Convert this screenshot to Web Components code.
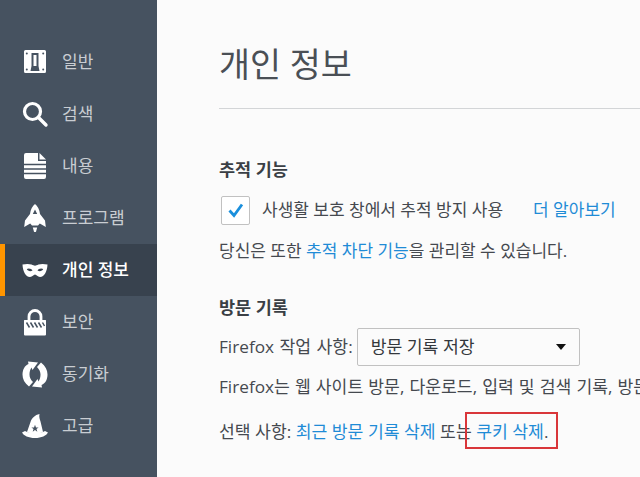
<!DOCTYPE html>
<html lang="ko">
<head>
<meta charset="utf-8">
<style>
  html, body { margin: 0; height: 100%; overflow: hidden; }
  body { font-family: "Open Sans", "Noto Sans CJK KR", sans-serif; }
</style>
</head>
<body>
<pref-page>
  <pref-sidebar slot="side">
    <pref-item label="일반" icon="general"></pref-item>
    <pref-item label="검색" icon="search"></pref-item>
    <pref-item label="내용" icon="content"></pref-item>
    <pref-item label="프로그램" icon="apps"></pref-item>
    <pref-item label="개인 정보" icon="mask" selected></pref-item>
    <pref-item label="보안" icon="lock"></pref-item>
    <pref-item label="동기화" icon="sync"></pref-item>
    <pref-item label="고급" icon="wizard"></pref-item>
  </pref-sidebar>
  <pref-heading>개인 정보</pref-heading>
  <pref-group heading="추적 기능" style="--head-gap:15px">
    <pref-check>사생활 보호 창에서 추적 방지 사용<a-link slot="more">더 알아보기</a-link></pref-check>
    <pref-line style="margin-top:14px;font-size:17px">당신은 또한 <a-link>추적 차단 기능</a-link>을 관리할 수 있습니다.</pref-line>
  </pref-group>
  <pref-group heading="방문 기록" style="padding-top:33px;--head-gap:10px">
    <pref-line class="sel">Firefox 작업 사항:<pref-select>방문 기록 저장</pref-select></pref-line>
    <pref-line style="margin-top:9px;word-spacing:.6px">Firefox는 웹 사이트 방문, 다운로드, 입력 및 검색 기록, 방문</pref-line>
    <pref-line style="margin-top:21px">선택 사항: <a-link>최근 방문 기록 삭제</a-link> 또는 <red-mark><a-link>쿠키 삭제</a-link>.</red-mark></pref-line>
  </pref-group>
</pref-page>

<script>
  // sidebar icons: 24 unit box with 2 units of room around it
  const ICONS = {
    general: '<path fill-rule="evenodd" d="M2.500 0h19A1.500 1.500 0 0 1 23 1.500v20a1.500 1.500 0 0 1-1.500 1.500h-19A1.500 1.500 0 0 1 1 21.500v-20A1.500 1.500 0 0 1 2.500 0zM8.500 3v13L7.500 21h9l-1-5V3zM3.800 2.500a1 1 0 1 0 0 2 1 1 0 0 0 0-2zM20.200 2.500a1 1 0 1 0 0 2 1 1 0 0 0 0-2zM3.800 18.500a1 1 0 1 0 0 2 1 1 0 0 0 0-2zM20.200 18.500a1 1 0 1 0 0 2 1 1 0 0 0 0-2z"/><path d="M10.500 5h3v11h-3z"/>',
    search: '<circle cx="9.500" cy="9.500" r="8" fill="none" stroke="#fff" stroke-width="3.200"/><path d="M15.500 15.500l7.500 7.500" stroke="#fff" stroke-width="3.400" stroke-linecap="round"/>',
    content: '<path d="M3 -1h12v8h8v16a2 2 0 0 1-2 2H3a2 2 0 0 1-2-2V1a2 2 0 0 1 2-2z"/><path d="M16.500 -1L23 5.500h-6.500z"/><path d="M1 10.500h22M1 15h22M1 19.500h22" stroke="#465260" stroke-width="1.600"/>',
    apps: '<path fill-rule="evenodd" d="M12 -2c2.500 2 4.500 5.500 5 10l5 6.500.8 6.500-6-3.500-1.800 2H9l-1.800-2-6 3.500.8-6.500L7 8c.5-4.500 2.500-8 5-10zM12 3.500L9.800 8h4.400z"/><path d="M9.800 21.500h4.400l-1 3.500a1.200 1.200 0 0 1-2.400 0z"/>',
    mask: '<path fill-rule="evenodd" d="M-.5 6.500C3 5.800 6 5.800 8.500 6.500c1.500.5 2.500 1.200 3.500 1.200s2-.7 3.500-1.200c2.500-.7 5.500-.7 9 0-.3 6.500-3 12.500-7.500 12.500-2.500 0-3.500-2.500-5-2.500S9.500 19 7 19C2.500 19-.2 13-.5 6.500zM3.800 11c.8 2 3.500 2.800 5.700 1.500-.8-1.700-3.600-2.700-5.700-1.500zM20.200 11c-2.100-1.200-4.900-.2-5.700 1.500 2.200 1.300 4.900.5 5.700-1.500z"/>',
    lock: '<path fill="none" stroke="#fff" stroke-width="2.800" d="M6 11V6.500a6 6 0 0 1 12 0V11"/><path d="M1.500 10h21a.5.5 0 0 1 .5.500V24.500a1 1 0 0 1-1 1H2a1 1 0 0 1-1-1V10.500a.5.5 0 0 1 .5-.500z"/><path d="M3.500 12.500l3 5M7.500 12.500l3 5M11.500 12.500l3 5M15.500 12.500l3 5M19.500 12.500l2 3.500" stroke="#465260" stroke-width="1.500"/>',
    sync: '<path d="M5 -.5L15 .5l-5.500 7.500-1-2.500C7 8 6.500 10 6.500 12.500c0 2.500 1 5 3.500 7.500l-4 4.500C1.500 21-.5 17-.5 12.500-.5 8 1.500 3.500 5.500 2z"/><path d="M5 -.5L15 .5l-5.500 7.500-1-2.500C7 8 6.500 10 6.500 12.500c0 2.500 1 5 3.500 7.500l-4 4.500C1.500 21-.5 17-.5 12.500-.5 8 1.500 3.500 5.500 2z" transform="rotate(180 12 12.500)"/>',
    wizard: '<path fill-rule="evenodd" d="M16.500 0c-.7 3 .3 5 1 7.500l2.500 10.500c-4.500 2-11.500 2-16 0L7.500 8c1.200-4 4.500-7 9-8zM12 10.800l-1 2.600H8.400l2.100 1.700-.8 2.600 2.300-1.600 2.300 1.600-.8-2.600 2.100-1.700H13z"/><path d="M-1 18.500l3-1.500c5 2.700 15 2.700 20 0l3 1.500c-1.500 3-6.500 5.500-13 5.500S.5 21.500-1 18.500z"/>'
  };

  class PrefPage extends HTMLElement {
    constructor() {
      super();
      this.attachShadow({ mode: 'open' }).innerHTML = `
        <style>
          :host { display: grid; grid-template-columns: 157px 1fr; width: 640px; height: 477px; overflow: hidden; background: #fbfbfb; color: #45494f; }
          main { padding: 0 0 0 62px; min-width: 0; overflow: hidden; }
        </style>
        <slot name="side"></slot>
        <main><slot></slot></main>`;
    }
  }

  class PrefSidebar extends HTMLElement {
    constructor() {
      super();
      this.attachShadow({ mode: 'open' }).innerHTML = `
        <style>
          :host { display: block; padding-top: 36px; background: #465260; }
        </style>
        <slot></slot>`;
    }
  }

  class PrefItem extends HTMLElement {
    connectedCallback() {
      const root = this.attachShadow({ mode: 'open' });
      root.innerHTML = `
        <style>
          :host { display: flex; align-items: center; gap: 13px; height: 52px; padding-left: 21px; color: #c9cdd2; font-size: 17px; }
          :host([selected]) { background: #38424e; color: #fff; font-weight: 500; box-shadow: inset 5px 0 0 #ff9500; }
          svg { width: 28px; height: 28px; fill: #fff; flex: none; }
          span { padding-bottom: 3px; }
        </style>
        <svg viewBox="-2 -2 28 28">${ICONS[this.getAttribute('icon')]}</svg>
        <span>${this.getAttribute('label')}</span>`;
    }
  }

  class PrefHeading extends HTMLElement {
    constructor() {
      super();
      this.attachShadow({ mode: 'open' }).innerHTML = `
        <style>
          :host { display: block; height: 109px; box-sizing: border-box; padding-top: 41px; font-size: 33.7px; line-height: 46px; border-bottom: 1px solid #d3d5d7; color: #4a4f55; }
        </style>
        <slot></slot>`;
    }
  }

  class PrefGroup extends HTMLElement {
    connectedCallback() {
      const root = this.attachShadow({ mode: 'open' });
      root.innerHTML = `
        <style>
          :host { display: block; box-sizing: border-box; padding-top: 49px; }
          h2 { margin: 0 0 var(--head-gap, 8px); font-size: 17.5px; line-height: 22px; font-weight: 700; color: #3a3f45; }
        </style>
        <h2>${this.getAttribute('heading')}</h2>
        <slot></slot>`;
    }
  }

  class PrefCheck extends HTMLElement {
    constructor() {
      super();
      this.attachShadow({ mode: 'open' }).innerHTML = `
        <style>
          :host { display: flex; align-items: center; height: 30px; font-size: 17px; white-space: nowrap; }
          .box { width: 29px; height: 29px; box-sizing: border-box; margin: 0 12px 0 2px; border: 1px solid #c1c1c1; border-radius: 2px; background: #fff; display: flex; align-items: center; justify-content: center; flex: none; }
          svg { width: 18px; height: 18px; }
          .text { padding-bottom: 3px; }
          .more { margin-left: 30px; padding-bottom: 3px; }
        </style>
        <span class="box"><svg viewBox="0 0 18 18"><path d="M2.500 9.500l4.500 5 8-11" fill="none" stroke="#1a8fdc" stroke-width="2.800"/></svg></span>
        <span class="text"><slot></slot></span>
        <span class="more"><slot name="more"></slot></span>`;
    }
  }

  class PrefLine extends HTMLElement {
    constructor() {
      super();
      this.attachShadow({ mode: 'open' }).innerHTML = `
        <style>
          :host { display: block; font-size: 17.2px; line-height: 24px; white-space: nowrap; }
          :host(.sel) { display: flex; align-items: center; height: 38px; word-spacing: 1px; }
        </style>
        <slot></slot>`;
    }
  }

  class PrefSelect extends HTMLElement {
    constructor() {
      super();
      this.attachShadow({ mode: 'open' }).innerHTML = `
        <style>
          :host { display: inline-flex; align-items: center; justify-content: space-between; box-sizing: border-box; width: 223px; height: 38px; margin-left: 4px; padding: 0 13px; border: 1px solid #c1c1c1; border-radius: 2px; background: #fbfbfb; color: #33373c; word-spacing: 0; }
          i { border: 5px solid transparent; border-top: 6px solid #111; border-bottom: 0; width: 0; }
        </style>
        <span><slot></slot></span><i></i>`;
    }
  }

  class ALink extends HTMLElement {
    constructor() {
      super();
      this.attachShadow({ mode: 'open' }).innerHTML = `
        <style>:host { color: #1f8bd6; }</style><slot></slot>`;
    }
  }

  // red box drawn over the screenshot text
  class RedMark extends HTMLElement {
    constructor() {
      super();
      this.attachShadow({ mode: 'open' }).innerHTML = `
        <style>
          :host { position: relative; display: inline-block; }
          b { position: absolute; left: -11px; top: -8px; width: 93px; height: 37px; border: 2px solid #d9363a; box-sizing: border-box; pointer-events: none; }
        </style>
        <slot></slot><b></b>`;
    }
  }

  customElements.define('pref-page', PrefPage);
  customElements.define('pref-sidebar', PrefSidebar);
  customElements.define('pref-item', PrefItem);
  customElements.define('pref-heading', PrefHeading);
  customElements.define('pref-group', PrefGroup);
  customElements.define('pref-check', PrefCheck);
  customElements.define('pref-line', PrefLine);
  customElements.define('pref-select', PrefSelect);
  customElements.define('a-link', ALink);
  customElements.define('red-mark', RedMark);
</script>
</body>
</html>
